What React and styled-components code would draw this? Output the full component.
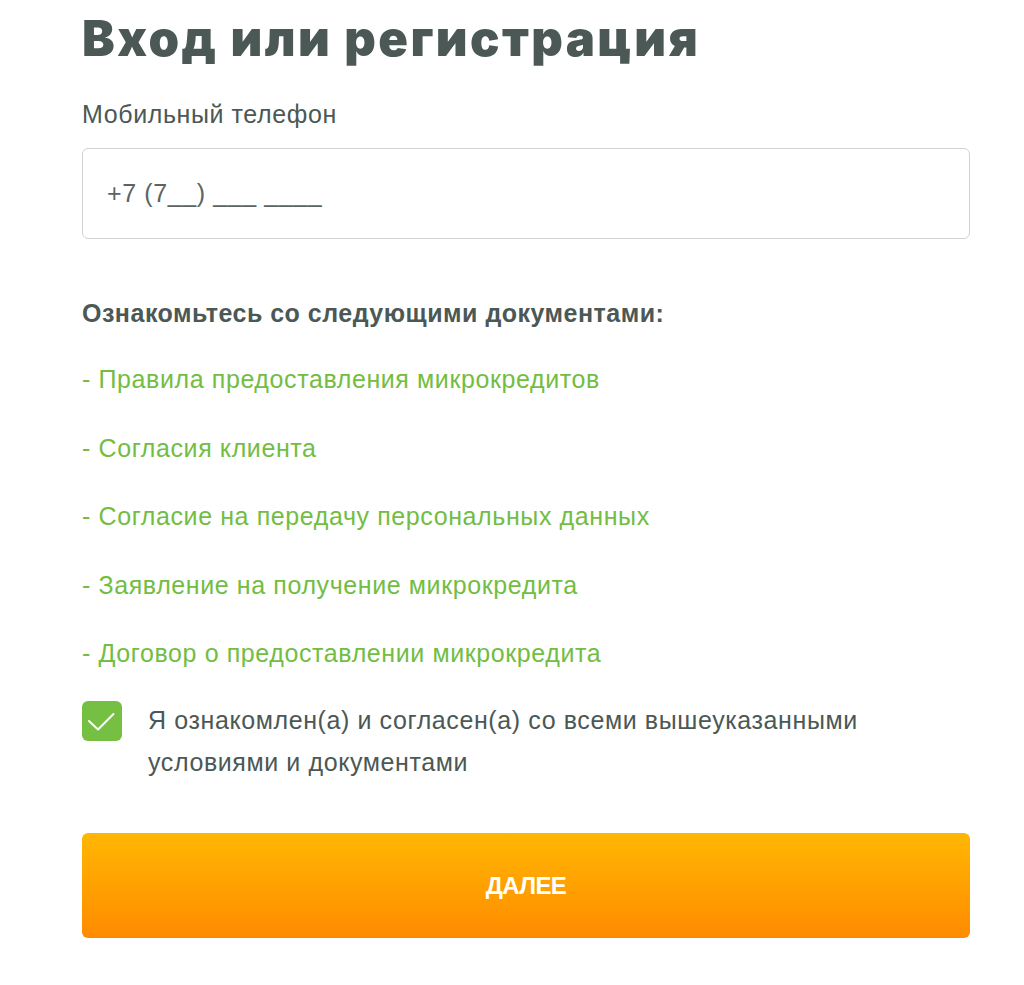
import React from "react";
import styled, { createGlobalStyle } from "styled-components";

const GlobalStyle = createGlobalStyle`
  body {
    margin: 0;
    background: #fff;
    font-family: "Liberation Sans", Arial, sans-serif;
  }
`;

const Page = styled.div`
  width: 888px;
  padding: 9px 0 40px 82px;
  display: flex;
  flex-direction: column;
`;

const Title = styled.h1`
  margin: 0;
  font-family: Inter, "Liberation Sans", sans-serif;
  font-weight: 900;
  font-size: 49px;
  line-height: 60px;
  letter-spacing: 2.4px;
  color: #4b5855;
`;

const Label = styled.label`
  margin-top: 31px;
  font-size: 25px;
  line-height: 28px;
  letter-spacing: 0.6px;
  color: #4b5855;
`;

const PhoneInput = styled.input`
  box-sizing: border-box;
  margin-top: 20px;
  width: 100%;
  height: 91px;
  padding: 0 24px;
  border: 1.5px solid #cfd3d3;
  border-radius: 6px;
  font-family: "Liberation Sans", Arial, sans-serif;
  font-size: 25px;
  letter-spacing: 0.6px;
  color: #5a6563;
  outline: none;

  &::placeholder {
    color: #5a6563;
  }
`;

const DocsHeading = styled.div`
  margin-top: 60px;
  font-size: 25px;
  line-height: 28px;
  letter-spacing: 0.5px;
  font-weight: 700;
  color: #4b5855;
`;

const DocList = styled.ul`
  list-style: none;
  margin: 38px 0 0;
  padding: 0;
  display: flex;
  flex-direction: column;
  gap: 40.5px;
`;

const DocLink = styled.a`
  display: block;
  font-size: 25px;
  line-height: 28px;
  letter-spacing: 0.6px;
  color: #72bd42;
  text-decoration: none;
  cursor: pointer;
`;

const Agree = styled.label`
  margin-top: 34px;
  display: flex;
  align-items: flex-start;
  gap: 26px;
  cursor: pointer;
`;

const CheckBox = styled.span`
  flex: none;
  width: 40px;
  height: 40px;
  border-radius: 6px;
  background: #75bf43;
  display: flex;
`;

const AgreeText = styled.span`
  font-size: 25px;
  line-height: 42px;
  letter-spacing: 0.6px;
  color: #4b5855;
  margin-top: -2px;
`;

const NextButton = styled.button`
  margin-top: 50px;
  width: 100%;
  height: 105px;
  border: none;
  border-radius: 6px;
  background: linear-gradient(180deg, #ffb703 0%, #ff8b00 100%);
  color: #fff;
  font-family: "Liberation Sans", Arial, sans-serif;
  font-weight: 700;
  font-size: 24px;
  letter-spacing: -0.6px;
  cursor: pointer;
`;

const docs = [
  "Правила предоставления микрокредитов",
  "Согласия клиента",
  "Согласие на передачу персональных данных",
  "Заявление на получение микрокредита",
  "Договор о предоставлении микрокредита",
];

export default function App() {
  return (
    <>
      <GlobalStyle />
      <Page>
        <Title>Вход или регистрация</Title>
        <Label htmlFor="phone">Мобильный телефон</Label>
        <PhoneInput id="phone" placeholder="+7 (7__) ___ ____" />
        <DocsHeading>Ознакомьтесь со следующими документами:</DocsHeading>
        <DocList>
          {docs.map((d) => (
            <li key={d}>
              <DocLink>- {d}</DocLink>
            </li>
          ))}
        </DocList>
        <Agree>
          <CheckBox>
            <svg width="40" height="40" viewBox="0 0 40 40" fill="none">
              <path d="M7 20 L16 28.5 L31.5 13" stroke="#fff" strokeWidth="2" strokeLinecap="round" strokeLinejoin="round" />
            </svg>
          </CheckBox>
          <AgreeText>
            Я ознакомлен(а) и согласен(а) со всеми вышеуказанными
            <br />
            условиями и документами
          </AgreeText>
        </Agree>
        <NextButton>ДАЛЕЕ</NextButton>
      </Page>
    </>
  );
}
